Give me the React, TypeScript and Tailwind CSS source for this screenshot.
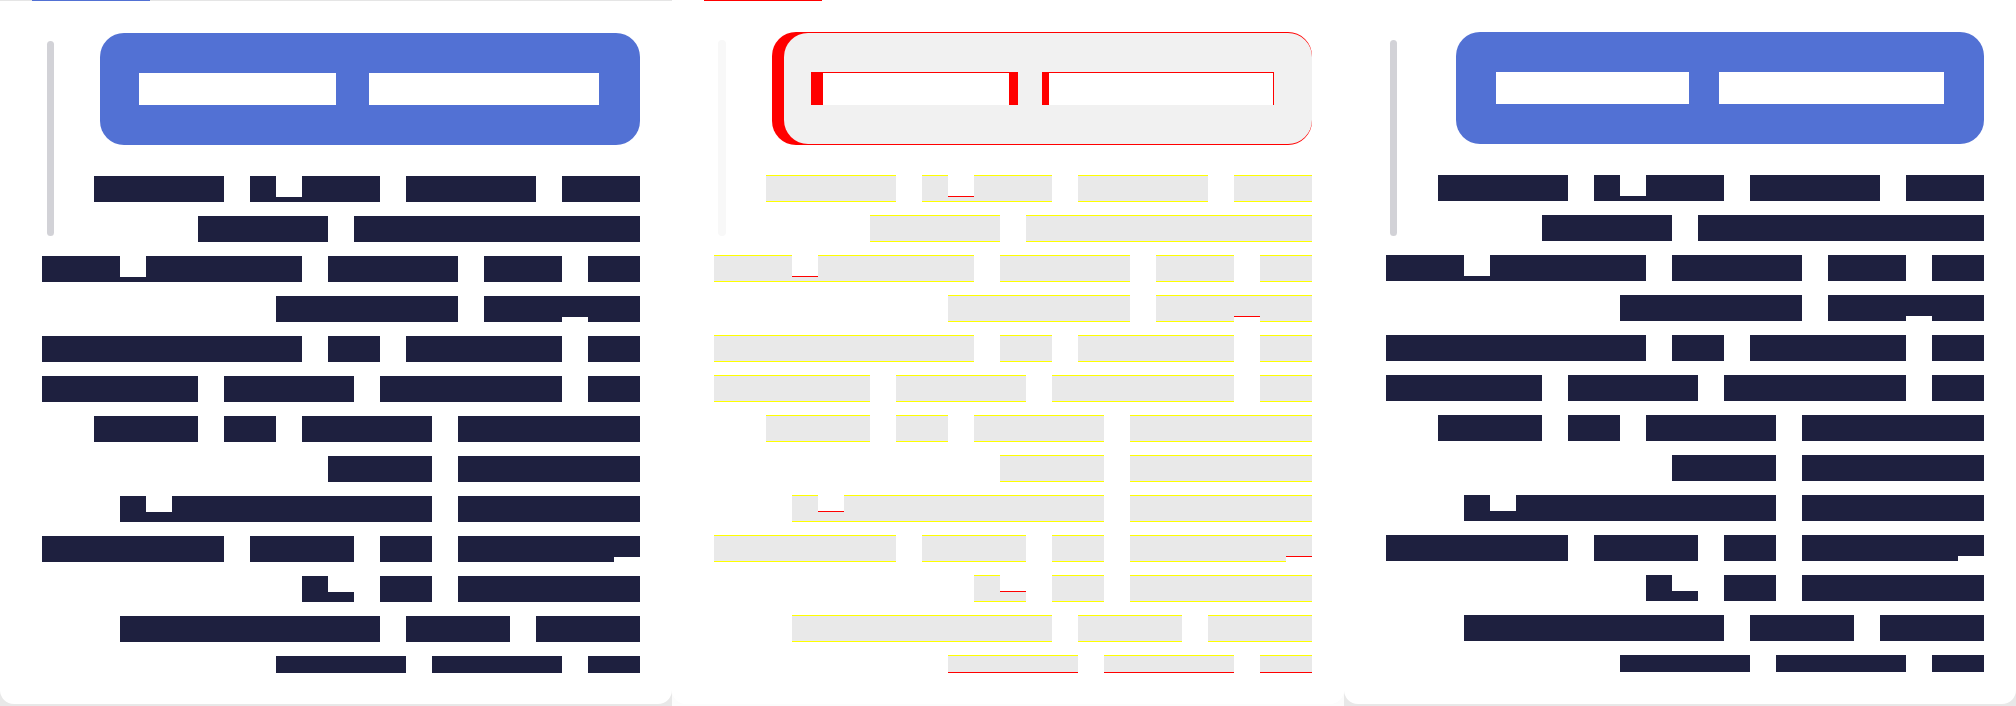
// visual regression view: expected | diff | actual

const ROWS = [
  "..#####.#b###.#####.###",
  "......#####.###########",
  "###b######.#####.###.##",
  ".........#######.###t##",
  "##########.##.######.##",
  "######.#####.#######.##",
  "..####.##.#####.#######",
  "...........####.#######",
  "...#B##########.#######",
  "#######.####.##.######t",
  "..........#B.##.#######",
  "...##########.####.####",
  ".........#####.#####.##",
]

function Cell({ c }: { c: string }) {
  if (c === "#") return <div className="h-[26px] bg-[#1e203f]" />
  if (c === "b")
    return (
      <div className="flex h-[26px] flex-col justify-end">
        <div className="h-[5px] bg-[#1e203f]" />
      </div>
    )
  if (c === "B")
    return (
      <div className="flex h-[26px] flex-col justify-end">
        <div className="h-[10px] bg-[#1e203f]" />
      </div>
    )
  if (c === "t")
    return (
      <div className="h-[26px]">
        <div className="h-[21px] bg-[#1e203f]" />
      </div>
    )
  return <div className="h-[26px]" />
}

function TextLines() {
  return (
    <div className="flex flex-col gap-[14px]">
      {ROWS.map((row, i) => (
        <div
          key={i}
          className={
            i === ROWS.length - 1
              ? "grid h-[17px] grid-cols-[repeat(23,26px)] overflow-hidden"
              : "grid h-[26px] grid-cols-[repeat(23,26px)]"
          }
        >
          {row.split("").map((c, j) => (
            <Cell key={j} c={c} />
          ))}
        </div>
      ))}
    </div>
  )
}

function DiffCell({ c, last }: { c: string; last: boolean }) {
  if (c === "#") {
    if (last) return <div className="h-[18px] border-t border-b border-t-[#ffff00] border-b-[#ff0000] bg-[#e9e9e9]" />
    return <div className="h-[27px] border-y border-[#ffff00] bg-[#e9e9e9]" />
  }
  if (c === "b")
    return (
      <div className="flex h-[27px] flex-col">
        <div className="h-[21px]" />
        <div className="h-px bg-[#ff0000]" />
        <div className="h-[4px] bg-[#e9e9e9]" />
        <div className="h-px bg-[#ffff00]" />
      </div>
    )
  if (c === "B")
    return (
      <div className="flex h-[27px] flex-col">
        <div className="h-[16px]" />
        <div className="h-px bg-[#ff0000]" />
        <div className="h-[9px] bg-[#e9e9e9]" />
        <div className="h-px bg-[#ffff00]" />
      </div>
    )
  if (c === "t")
    return (
      <div className="flex h-[27px] flex-col">
        <div className="h-px bg-[#ffff00]" />
        <div className="h-[20px] bg-[#e9e9e9]" />
        <div className="h-px bg-[#ff0000]" />
      </div>
    )
  return <div className="h-[27px]" />
}

function DiffLines() {
  return (
    <div className="flex flex-col gap-[13px]">
      {ROWS.map((row, i) => (
        <div
          key={i}
          className={
            i === ROWS.length - 1
              ? "grid h-[18px] grid-cols-[repeat(23,26px)] overflow-hidden"
              : "grid h-[27px] grid-cols-[repeat(23,26px)]"
          }
        >
          {row.split("").map((c, j) => (
            <DiffCell key={j} c={c} last={i === ROWS.length - 1} />
          ))}
        </div>
      ))}
    </div>
  )
}

function ExpectedPanel() {
  return (
    <div className="h-[706px] w-[672px] shrink-0 bg-[#e8e8e8]">
      <div className="relative h-[704px] overflow-hidden rounded-b-[14px] bg-white">
        <div className="h-px bg-[#e5e5e5]">
          <div className="ml-[32px] h-px w-[118px] bg-[#5271d4]" />
        </div>
        <div className="absolute left-[47px] top-[41px] h-[195px] w-[7px] rounded-full bg-[#d2d2d7]" />
        <div className="pl-[42px]">
          <div className="ml-[58px] mt-[32px] flex h-[112px] w-[540px] gap-[33px] rounded-3xl bg-[#5271d4] pl-[39px] pt-[40px]">
            <div className="h-[32px] w-[197px] bg-white" />
            <div className="h-[32px] w-[230px] bg-white" />
          </div>
          <div className="mt-[31px]">
            <TextLines />
          </div>
        </div>
      </div>
    </div>
  )
}

function DiffPanel() {
  return (
    <div className="h-[706px] w-[672px] shrink-0 bg-[#fcfcfc]">
      <div className="relative h-[704px] overflow-hidden rounded-b-[14px] bg-white">
        <div className="h-px">
          <div className="ml-[32px] h-px w-[118px] bg-[#ff0000]" />
        </div>
        <div className="absolute left-[46px] top-[40px] h-[196px] w-[8px] rounded-full bg-[#f8f8f8]" />
        <div className="pl-[42px]">
          <div className="ml-[58px] mt-[31px] h-[113px] w-[540px] rounded-3xl bg-[#ff0000] pl-[12px] pt-px">
            <div className="flex h-[111px] w-[528px] rounded-3xl bg-[#f1f1f1] pl-[27px] pt-[39px]">
              <div className="h-[33px] w-[12px] bg-[#ff0000]" />
              <div className="h-[33px] w-[186px] border-t border-[#ff0000] bg-white" />
              <div className="h-[33px] w-[9px] bg-[#ff0000]" />
              <div className="ml-[24px] h-[33px] w-[7px] bg-[#ff0000]" />
              <div className="h-[33px] w-[224px] border-t border-[#ff0000] bg-white" />
              <div className="h-[33px] w-px bg-[#ff0000]" />
            </div>
          </div>
          <div className="mt-[30px]">
            <DiffLines />
          </div>
        </div>
      </div>
    </div>
  )
}

function ActualPanel() {
  return (
    <div className="h-[706px] w-[672px] shrink-0 bg-[#e8e8e8]">
      <div className="relative h-[704px] overflow-hidden rounded-b-[14px] bg-white">
        <div className="h-px" />
        <div className="absolute left-[46px] top-[40px] h-[196px] w-[7px] rounded-full bg-[#d2d2d7]" />
        <div className="pl-[42px]">
          <div className="ml-[70px] mt-[31px] flex h-[112px] w-[528px] gap-[30px] rounded-3xl bg-[#5271d4] pl-[40px] pt-[40px]">
            <div className="h-[32px] w-[193px] bg-white" />
            <div className="h-[32px] w-[225px] bg-white" />
          </div>
          <div className="mt-[31px]">
            <TextLines />
          </div>
        </div>
      </div>
    </div>
  )
}

export default function App() {
  return (
    <div className="flex h-[706px] w-[2016px] overflow-hidden bg-white">
      <ExpectedPanel />
      <DiffPanel />
      <ActualPanel />
    </div>
  )
}
